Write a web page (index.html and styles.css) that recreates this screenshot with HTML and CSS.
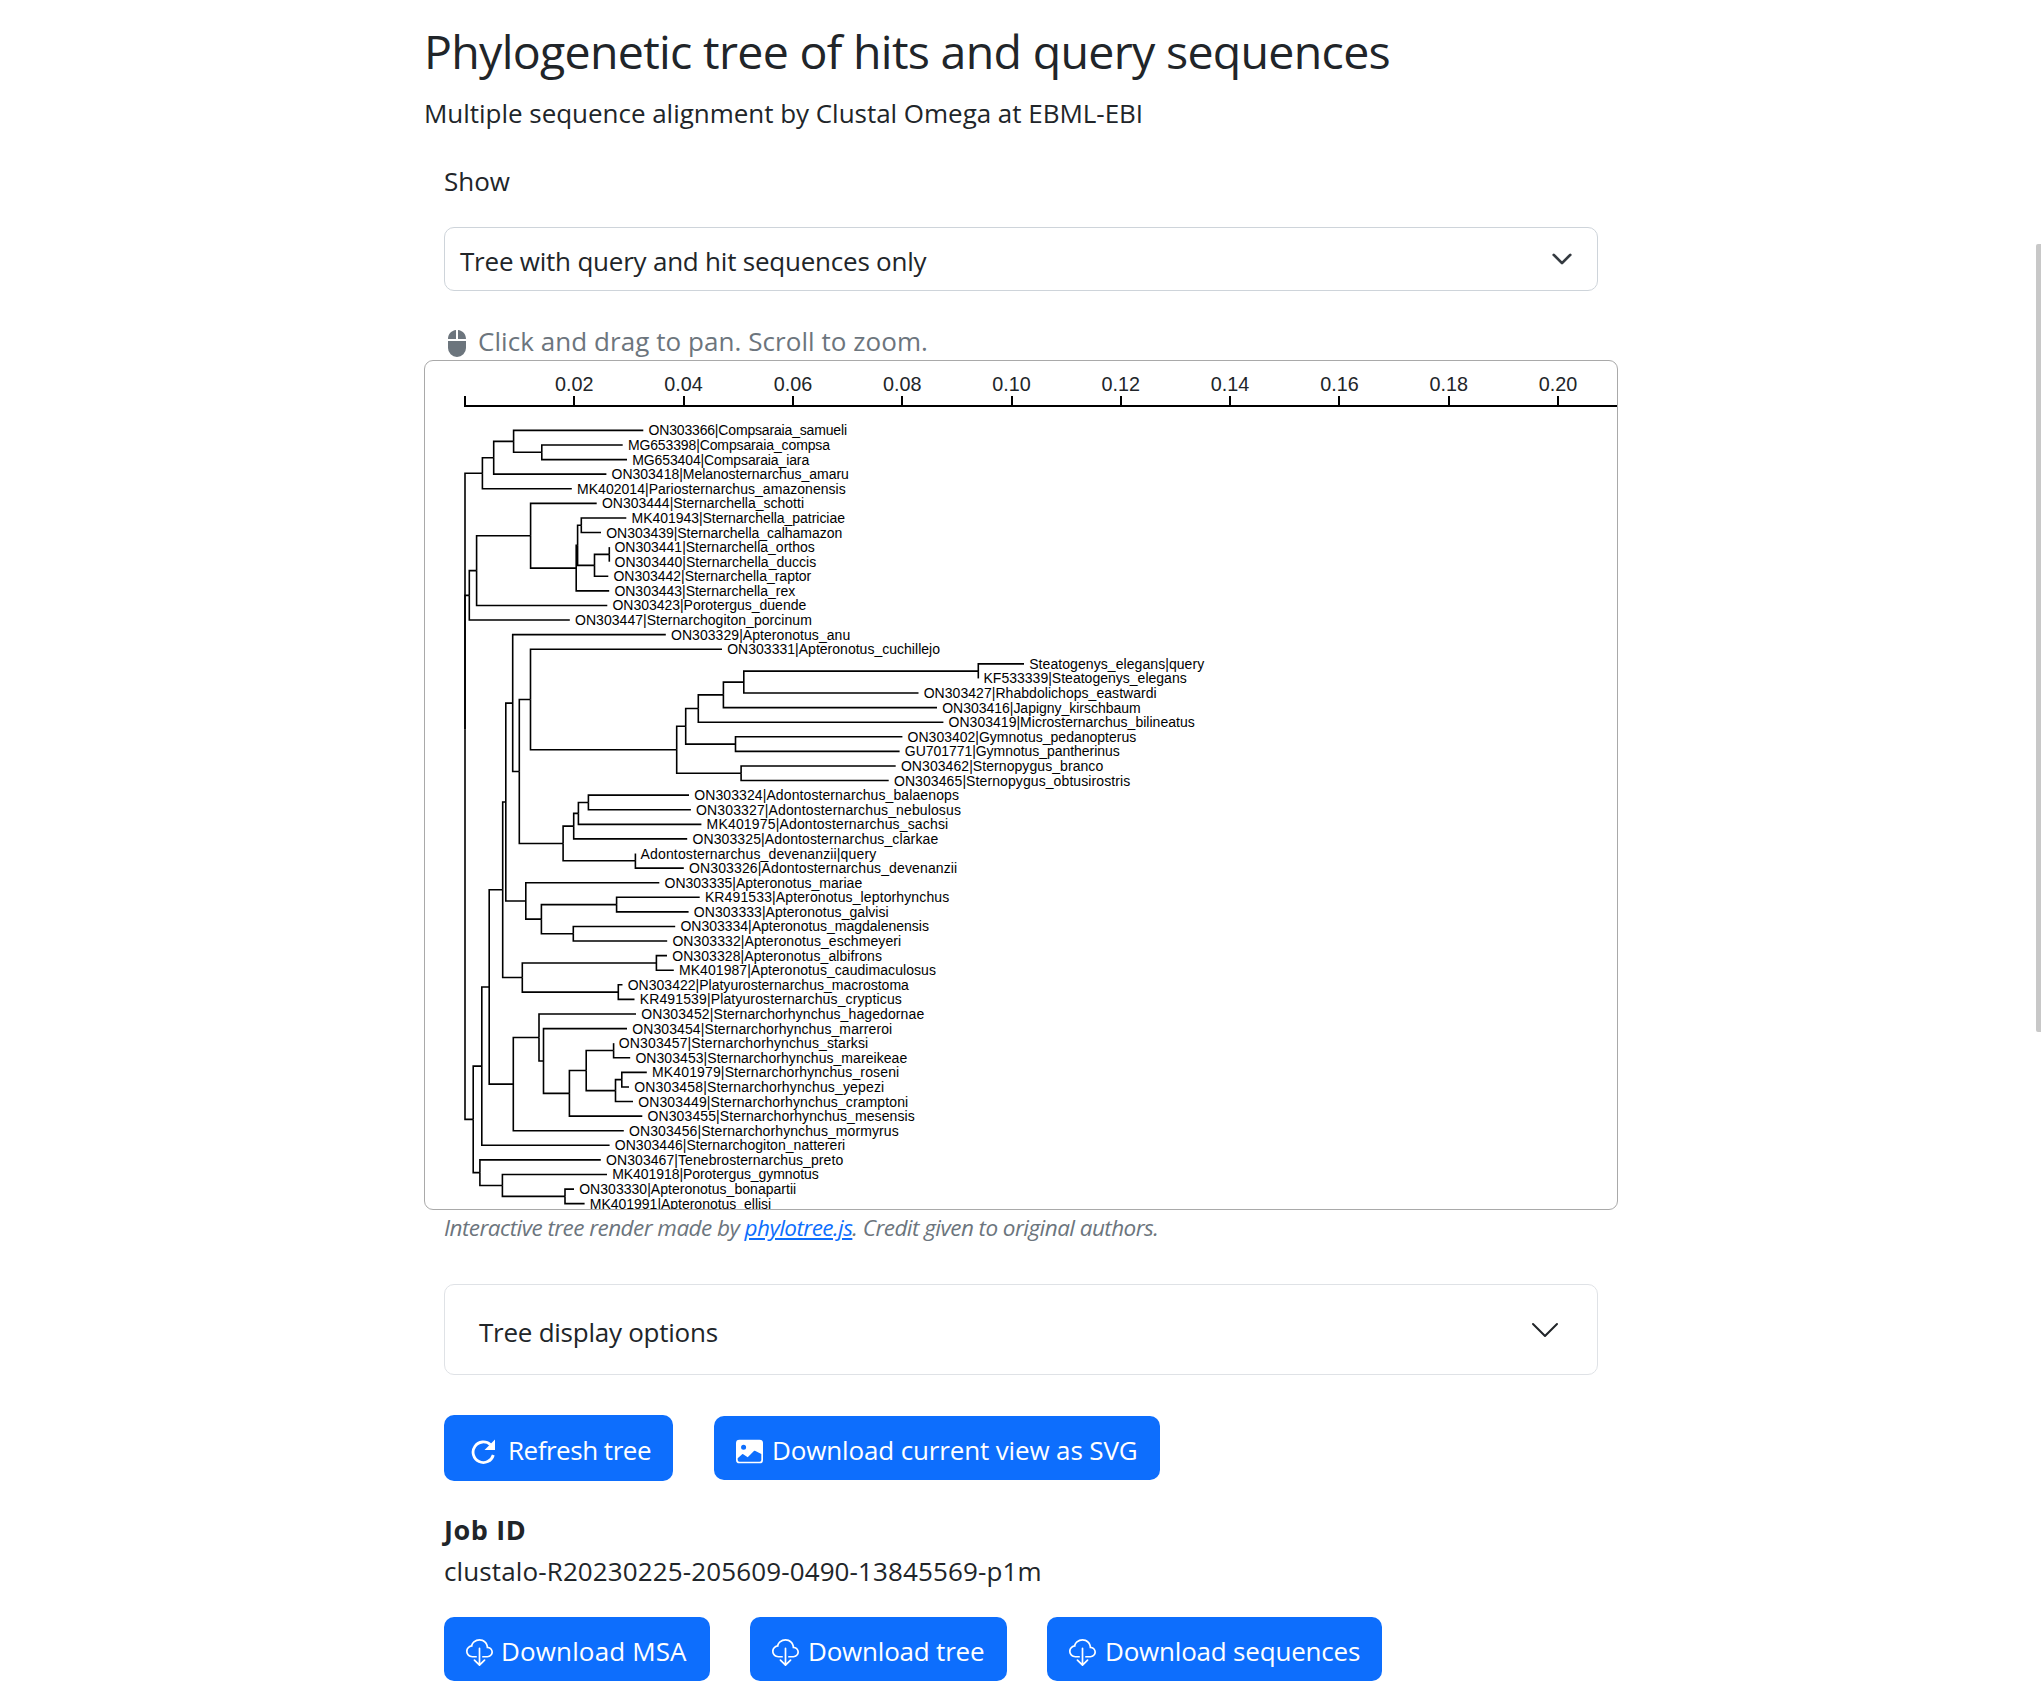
FILE: index.html
```html
<!DOCTYPE html>
<html lang="en">
<head>
<meta charset="utf-8">
<title>Phylogenetic tree</title>
<link rel="stylesheet" href="styles.css">
</head>
<body>
<svg class="sprite" aria-hidden="true">
  <symbol id="cloud-download" viewBox="0 0 16 16">
    <path d="M4.406 1.342A5.53 5.53 0 0 1 8 0c2.69 0 4.923 2 5.166 4.579C14.758 4.804 16 6.137 16 7.773 16 9.569 14.502 11 12.687 11H10a.5.5 0 0 1 0-1h2.688C13.979 10 15 8.988 15 7.773c0-1.216-1.02-2.228-2.313-2.228h-.5v-.5C12.188 2.825 10.328 1 8 1a4.53 4.53 0 0 0-2.941 1.1c-.757.652-1.153 1.438-1.153 2.055v.448l-.445.049C2.064 4.805 1 5.952 1 7.318 1 8.785 2.23 10 3.781 10H6a.5.5 0 0 1 0 1H3.781C1.708 11 0 9.366 0 7.318c0-1.763 1.266-3.223 2.942-3.593.143-.863.698-1.723 1.464-2.383z"/>
    <path d="M7.646 15.854a.5.5 0 0 0 .708 0l3-3a.5.5 0 0 0-.708-.708L8.5 14.293V5.5a.5.5 0 0 0-1 0v8.793l-2.146-2.147a.5.5 0 0 0-.708.708l3 3z"/>
  </symbol>
</svg>
<main class="page">
  <h1 class="title">Phylogenetic tree of hits and query sequences</h1>
  <p class="subtitle">Multiple sequence alignment by Clustal Omega at EBML-EBI</p>
  <label class="show-label">Show</label>
  <div class="select">
    <span>Tree with query and hit sequences only</span>
    <svg class="select-arrow" viewBox="0 0 16 16"><path d="m2 5 6 6 6-6"/></svg>
  </div>
  <p class="hint">
    <svg class="mouse" viewBox="0 0 18 27"><path d="M8 0v9H0C0 4 3.500.500 8 0zM10 0v9h8C18 4 14.500.500 10 0zM0 11h18v7a9 9 0 0 1-18 0z"/></svg>
    <span>Click and drag to pan. Scroll to zoom.</span>
  </p>
  <div class="tree-box"><svg id="tree" class="tree" viewBox="425 360 1192 849"></svg></div>
  <p class="credit">Interactive tree render made by <a class="link" href="#">phylotree.js</a>. Credit given to original authors.</p>
  <div class="options">
    <span>Tree display options</span>
    <svg class="options-arrow" viewBox="0 0 16 16"><path d="M1.646 4.646a.5.5 0 0 1 .708 0L8 10.293l5.646-5.647a.5.5 0 0 1 .708.708l-6 6a.5.5 0 0 1-.708 0l-6-6a.5.5 0 0 1 0-.708z"/></svg>
  </div>
  <div class="buttons view-buttons">
    <button class="btn refresh">
      <svg class="icon" viewBox="0 0 27 27"><path class="arc" d="M20.500 6.800A10.300 10.300 0 1 0 23.300 17"/><path d="M25 1.500v10.500H14.500z"/></svg>
      <span>Refresh tree</span>
    </button>
    <button class="btn save-view">
      <svg class="icon" viewBox="0 0 16 16"><path d="M.002 3a2 2 0 0 1 2-2h12a2 2 0 0 1 2 2v10a2 2 0 0 1-2 2h-12a2 2 0 0 1-2-2V3zm1 9v1a1 1 0 0 0 1 1h12a1 1 0 0 0 1-1V9.500l-3.777-1.947a.5.5 0 0 0-.577.093l-3.710 3.710-2.660-1.772a.5.5 0 0 0-.630.062L1.002 12zm5-6.500a1.500 1.500 0 1 0-3 0 1.500 1.500 0 0 0 3 0z"/></svg>
      <span>Download current view as SVG</span>
    </button>
  </div>
  <h2 class="job-title">Job ID</h2>
  <p class="job-id">clustalo-R20230225-205609-0490-13845569-p1m</p>
  <div class="buttons file-buttons">
    <button class="btn msa"><svg class="icon"><use href="#cloud-download"/></svg><span>Download MSA</span></button>
    <button class="btn newick"><svg class="icon"><use href="#cloud-download"/></svg><span>Download tree</span></button>
    <button class="btn fasta"><svg class="icon"><use href="#cloud-download"/></svg><span>Download sequences</span></button>
  </div>
</main>
<div class="scroll-thumb"></div>
<script src="tree.js"></script>
</body>
</html>
```
FILE: tree.js
```js
// Each node is [x, child, child, ...]; a leaf is [x, "label", x where the label ends].
const root = [465,
  [482.4,
    [493.7,
      [513.6, [643.3, "ON303366|Compsaraia_samueli", 846.8],
        [541.8, [622.7, "MG653398|Compsaraia_compsa", 829.8], [627, "MG653404|Compsaraia_iara", 809]]],
      [606.4, "ON303418|Melanosternarchus_amaru", 848.7]],
    [571.8, "MK402014|Pariosternarchus_amazonensis", 845.5]],
  [469.3,
    [476.6,
      [530.6, [596.7, "ON303444|Sternarchella_schotti", 803.8],
        [576.2,
          [577.6,
            [581.3, [626.3, "MK401943|Sternarchella_patriciae", 844.8], [601, "ON303439|Sternarchella_calhamazon", 842]],
            [594.5,
              [609.3, [609.3, "ON303441|Sternarchella_orthos", 814.5], [609.3, "ON303440|Sternarchella_duccis", 816]],
              [608.3, "ON303442|Sternarchella_raptor", 811]]],
          [609.2, "ON303443|Sternarchella_rex", 795]]],
      [607.3, "ON303423|Porotergus_duende", 806]],
    [569.8, "ON303447|Sternarchogiton_porcinum", 811.6]],
  [473.2,
    [481.8,
      [489.2,
        [502.7,
          [505.8,
            [512.7, [665.8, "ON303329|Apteronotus_anu", 850],
              [519.3,
                [530.5, [722, "ON303331|Apteronotus_cuchillejo", 939.8],
                  [676.7,
                    [685.7,
                      [698.3,
                        [723.4,
                          [743.8,
                            [978.3, [1024, "Steatogenys_elegans|query", 1204], [978.3, "KF533339|Steatogenys_elegans", 1186.5]],
                            [918.5, "ON303427|Rhabdolichops_eastwardi", 1156.5]],
                          [937, "ON303416|Japigny_kirschbaum", 1140.5]],
                        [943.4, "ON303419|Microsternarchus_bilineatus", 1194.5]],
                      [735.5, [902.4, "ON303402|Gymnotus_pedanopterus", 1136], [899.6, "GU701771|Gymnotus_pantherinus", 1119.5]]],
                    [741.1, [895.7, "ON303462|Sternopygus_branco", 1103], [888.7, "ON303465|Sternopygus_obtusirostris", 1130]]]],
                [563.1,
                  [573.7,
                    [578.4,
                      [588.4, [689, "ON303324|Adontosternarchus_balaenops", 958.7], [690.9, "ON303327|Adontosternarchus_nebulosus", 960.7]],
                      [701.4, "MK401975|Adontosternarchus_sachsi", 948]],
                    [687.2, "ON303325|Adontosternarchus_clarkae", 938]],
                  [635.4, [635.4, "Adontosternarchus_devenanzii|query", 876], [683.8, "ON303326|Adontosternarchus_devenanzii", 957]]]]],
            [525.8, [659.3, "ON303335|Apteronotus_mariae", 862],
              [541.4,
                [616.6, [699.7, "KR491533|Apteronotus_leptorhynchus", 949], [688.6, "ON303333|Apteronotus_galvisi", 888.5]],
                [573.3, [675.2, "ON303334|Apteronotus_magdalenensis", 928.7], [667.2, "ON303332|Apteronotus_eschmeyeri", 901]]]]],
          [522.3,
            [656.4, [667, "ON303328|Apteronotus_albifrons", 881.7], [673.8, "MK401987|Apteronotus_caudimaculosus", 935.7]],
            [618.3, [622.5, "ON303422|Platyurosternarchus_macrostoma", 908.7], [634.5, "KR491539|Platyurosternarchus_crypticus", 901.6]]]],
        [513.3,
          [539, [636, "ON303452|Sternarchorhynchus_hagedornae", 924],
            [543.5, [627, "ON303454|Sternarchorhynchus_marreroi", 892],
              [569.4,
                [586.2,
                  [613.6, [613.6, "ON303457|Sternarchorhynchus_starksi", 868], [630.2, "ON303453|Sternarchorhynchus_mareikeae", 907]],
                  [615.5,
                    [621.8, [646.8, "MK401979|Sternarchorhynchus_roseni", 899], [629, "ON303458|Sternarchorhynchus_yepezi", 884]],
                    [633, "ON303449|Sternarchorhynchus_cramptoni", 908]]],
                [642.3, "ON303455|Sternarchorhynchus_mesensis", 914.6]]]],
          [623.8, "ON303456|Sternarchorhynchus_mormyrus", 898.5]]],
      [609.6, "ON303446|Sternarchogiton_nattereri", 845]],
    [479.9, [600.8, "ON303467|Tenebrosternarchus_preto", 843],
      [502.4, [607, "MK401918|Porotergus_gymnotus", 818.6],
        [565, [574, "ON303330|Apteronotus_bonapartii", 796], [584.6, "MK401991|Apteronotus_ellisi", 771]]]]]];

const svg = document.getElementById("tree");
const add = (name, cls, attrs, text) => {
  const el = document.createElementNS("http://www.w3.org/2000/svg", name);
  el.setAttribute("class", cls);
  for (const key in attrs) el.setAttribute(key, attrs[key]);
  if (text) el.textContent = text;
  svg.append(el);
};

// Scale bar
add("path", "axis", { d: "M465 396V406H1618" });
for (let i = 1; i <= 10; i++) {
  const x = 465 + i * 109.3;
  add("path", "axis", { d: `M${Math.round(x)} 396V406` });
  add("text", "axis-label", { x, y: 391 }, (i * 0.02).toFixed(2));
}

// Leaves take consecutive rows; an inner node sits at the mean of its children.
let row = 0;
function draw(node) {
  const [x, ...kids] = node;
  if (typeof kids[0] === "string") {
    const y = 430.4 + 14.59 * row++;
    add("text", "leaf", { x: x + 5.2, y: y + 5, textLength: (kids[1] - x - 5).toFixed(1) }, kids[0]);
    return y;
  }
  const ys = kids.map(draw);
  const y = ys.reduce((a, b) => a + b) / ys.length;
  kids.forEach((kid, i) => add("path", "branch", { d: `M${x} ${y}V${ys[i]}H${kid[0]}` }));
  return y;
}
draw(root);
```
FILE: styles.css
```css
* { box-sizing: border-box; }
body { margin: 0; background: #fff; color: #212529; font: 26px/40px "Open Sans", "Noto Sans", sans-serif; overflow: hidden; }
h1, h2, p { margin: 0; font-weight: 400; }
.sprite { display: none; }
.page { width: 1194px; margin-left: 424px; padding-top: 23px; }
.page > * { margin-left: 20px; margin-right: 20px; }
.page > .title, .page > .subtitle, .page > .tree-box { margin-left: 0; margin-right: 0; }
.title { font-size: 46.500px; line-height: 56px; letter-spacing: -.700px; }
.subtitle { margin-top: 14px; letter-spacing: -.030px; }
.show-label { display: block; margin-top: 28px; }
.select { display: flex; justify-content: space-between; align-items: center; margin-top: 26px; height: 64px; padding: 3px 24px 0 15px; border: 1px solid #ced4da; border-radius: 10px; letter-spacing: -.220px; }
.select-arrow { width: 22px; height: 22px; margin-top: -4px; fill: none; stroke: #343a40; stroke-width: 2; stroke-linecap: round; stroke-linejoin: round; }
.hint { display: flex; align-items: center; gap: 12px; margin-top: 31px; padding-left: 4px; line-height: 38px; color: #6c757d; letter-spacing: .060px; }
.mouse { width: 18px; height: 27px; margin-top: 5px; fill: #6c757d; }
.tree-box { height: 850px; border: 1px solid #a9a9a9; border-radius: 9px; overflow: hidden; }
.tree { display: block; width: 1192px; height: 849px; margin-top: -1px; }
.axis { fill: none; stroke: #000; stroke-width: 2; }
.axis-label { font: 19.800px "Liberation Sans", Arial, sans-serif; text-anchor: middle; fill: #212529; }
.branch { fill: none; stroke: #000; stroke-width: 1.600px; }
.leaf { font: 14px "Liberation Sans", Arial, sans-serif; fill: #000; }
.credit { padding-top: 2px; font-size: 22.500px; line-height: 32px; font-style: italic; color: #6c757d; letter-spacing: -.550px; }
.link { color: #0d6efd; }
.options { display: flex; justify-content: space-between; align-items: center; margin-top: 40px; height: 91px; padding: 5px 36px 0 34px; border: 1px solid #dfe2e6; border-radius: 10px; letter-spacing: -.250px; }
.options-arrow { width: 32px; height: 32px; margin-top: -5px; fill: #212529; }
.buttons { display: flex; align-items: center; gap: 40px; letter-spacing: -.200px; }
.file-buttons { margin-top: 26px; }
.view-buttons { margin-top: 40px; gap: 41px; }
.btn { display: flex; align-items: center; height: 64px; padding: 3px 0 0 22px; border: 0; border-radius: 10px; background: #0d6efd; color: #fff; font: inherit; letter-spacing: inherit; white-space: nowrap; gap: 9px; }
.icon { width: 27px; height: 27px; fill: #fff; flex: none; margin-top: 3px; }
.refresh { width: 229px; height: 66px; padding-left: 26px; gap: 11px; letter-spacing: -.480px; }
.save-view { width: 446px; letter-spacing: -.140px; }
.msa { width: 266px; gap: 8px; letter-spacing: .140px; }
.newick { width: 257px; }
.fasta { width: 335px; }
.arc { fill: none; stroke: #fff; stroke-width: 2.800; }
.job-title { margin-top: 29px; font-size: 27px; font-weight: 700; letter-spacing: .600px; }
.job-id { margin-top: 1px; letter-spacing: .120px; }
.scroll-thumb { position: fixed; right: 0; top: 244px; width: 5px; height: 788px; background: #c8c8c8; border-radius: 2px 0 0 2px; }
```
